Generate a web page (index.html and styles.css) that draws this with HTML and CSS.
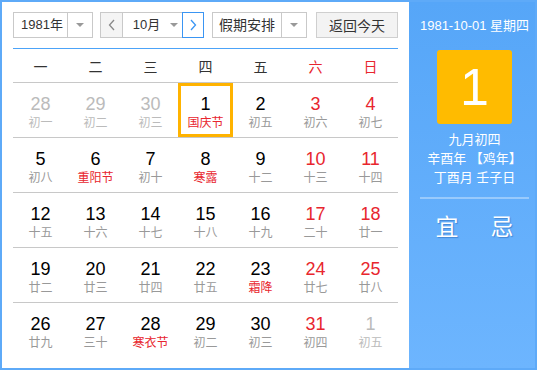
FILE: index.html
```html
<!DOCTYPE html>
<html lang="zh-CN">
<head>
  <meta charset="UTF-8" />
  <meta name="viewport" content="width=device-width, initial-scale=1" />
  <title>万年历</title>
  <link rel="stylesheet" href="styles.css">
</head>
<body>

  <div class="calendar">
    <div class="main">
      <div class="toolbar">
        <div class="select year-select">
          <span class="select-text">1981年</span>
          <span class="select-arrow"><i></i></span>
        </div>
        <div class="month-group">
          <button class="nav-btn prev">
            <svg width="8" height="12" viewBox="0 0 8 12"><polyline points="6,1 1.5,6 6,11" fill="none" stroke="#888" stroke-width="1.3"/></svg>
          </button>
          <div class="month-select">
            <span class="select-text">10月</span>
            <i></i>
          </div>
          <button class="nav-btn next">
            <svg width="8" height="12" viewBox="0 0 8 12"><polyline points="2,1 6.5,6 2,11" fill="none" stroke="#3a95f3" stroke-width="1.3"/></svg>
          </button>
        </div>
        <div class="select holiday-select">
          <span class="select-text">假期安排</span>
          <span class="select-arrow"><i></i></span>
        </div>
        <button class="today-btn">返回今天</button>
      </div>

      <div class="weekdays">
        <span>一</span><span>二</span><span>三</span><span>四</span><span>五</span>
        <span class="wk">六</span><span class="wk">日</span>
      </div>

      <div class="days">
        <div class="row">
          <div class="day other"><b>28</b><em>初一</em></div>
          <div class="day other"><b>29</b><em>初二</em></div>
          <div class="day other"><b>30</b><em>初三</em></div>
          <div class="day selected"><b>1</b><em class="fest">国庆节</em></div>
          <div class="day"><b>2</b><em>初五</em></div>
          <div class="day wk"><b>3</b><em>初六</em></div>
          <div class="day wk"><b>4</b><em>初七</em></div>
        </div>
        <div class="row">
          <div class="day"><b>5</b><em>初八</em></div>
          <div class="day"><b>6</b><em class="fest">重阳节</em></div>
          <div class="day"><b>7</b><em>初十</em></div>
          <div class="day"><b>8</b><em class="fest">寒露</em></div>
          <div class="day"><b>9</b><em>十二</em></div>
          <div class="day wk"><b>10</b><em>十三</em></div>
          <div class="day wk"><b>11</b><em>十四</em></div>
        </div>
        <div class="row">
          <div class="day"><b>12</b><em>十五</em></div>
          <div class="day"><b>13</b><em>十六</em></div>
          <div class="day"><b>14</b><em>十七</em></div>
          <div class="day"><b>15</b><em>十八</em></div>
          <div class="day"><b>16</b><em>十九</em></div>
          <div class="day wk"><b>17</b><em>二十</em></div>
          <div class="day wk"><b>18</b><em>廿一</em></div>
        </div>
        <div class="row">
          <div class="day"><b>19</b><em>廿二</em></div>
          <div class="day"><b>20</b><em>廿三</em></div>
          <div class="day"><b>21</b><em>廿四</em></div>
          <div class="day"><b>22</b><em>廿五</em></div>
          <div class="day"><b>23</b><em class="fest">霜降</em></div>
          <div class="day wk"><b>24</b><em>廿七</em></div>
          <div class="day wk"><b>25</b><em>廿八</em></div>
        </div>
        <div class="row">
          <div class="day"><b>26</b><em>廿九</em></div>
          <div class="day"><b>27</b><em>三十</em></div>
          <div class="day"><b>28</b><em class="fest">寒衣节</em></div>
          <div class="day"><b>29</b><em>初二</em></div>
          <div class="day"><b>30</b><em>初三</em></div>
          <div class="day wk"><b>31</b><em>初四</em></div>
          <div class="day other"><b>1</b><em>初五</em></div>
        </div>
      </div>
    </div>

    <div class="aside">
      <div class="aside-date">1981-10-01 星期四</div>
      <div class="big-day">1</div>
      <div class="lunar">
        <p>九月初四</p>
        <p>辛酉年 【鸡年】</p>
        <p>丁酉月 壬子日</p>
      </div>
      <div class="yiji">
        <span>宜</span>
        <span>忌</span>
      </div>
    </div>
  </div>

</body>
</html>
```

FILE: styles.css
```css
body {
  margin: 0;
  padding: 0;
  font-family: "Liberation Sans", "Noto Sans CJK SC", sans-serif;
  background: #fff;
}

.calendar {
  width: 537px;
  height: 370px;
  box-sizing: border-box;
  border: 2px solid #5eaaf8;
  display: flex;
}

.main {
  flex: 0 0 407px;
  box-sizing: border-box;
  background: #fff;
  padding: 10px 11px 0 11px;
}

/* toolbar */
.toolbar {
  display: flex;
  align-items: center;
  height: 26px;
  padding-bottom: 10px;
  border-bottom: 1px solid #4ca3f8;
}

.select {
  display: flex;
  height: 26px;
  box-sizing: border-box;
  border: 1px solid #c9c9c9;
  background: #fff;
  font-size: 13px;
  color: #333;
}

.select-text {
  flex: 1;
  text-align: center;
  line-height: 24px;
}

.select-arrow {
  width: 24px;
  border-left: 1px solid #c9c9c9;
  display: flex;
  align-items: center;
  justify-content: center;
}

.select i,
.month-select i {
  width: 0;
  height: 0;
  border-left: 4px solid transparent;
  border-right: 4px solid transparent;
  border-top: 4px solid #999;
}

.year-select {
  width: 80px;
}

.year-select .select-text {
  padding-left: 3px;
}

.month-group {
  display: flex;
  width: 104px;
  height: 26px;
  margin-left: 7px;
  box-sizing: border-box;
  border: 1px solid #c9c9c9;
  border-right: none;
}

.nav-btn {
  width: 22px;
  padding: 0;
  margin: 0;
  border: none;
  background: #f4f4f4;
  display: flex;
  align-items: center;
  justify-content: center;
}

.nav-btn.prev {
  border-right: 1px solid #c9c9c9;
}

.nav-btn.next {
  background: #fff;
  border: 1px solid #3a95f3;
  margin: -1px 0;
  height: 26px;
}

.month-select {
  flex: 1;
  display: flex;
  align-items: center;
  justify-content: center;
  gap: 10px;
  font-size: 13px;
  color: #333;
}

.month-select .select-text {
  flex: none;
  padding-left: 6px;
}

.holiday-select {
  width: 95px;
  margin-left: 8px;
}

.holiday-select .select-text {
  font-size: 14px;
}

.today-btn {
  margin-left: auto;
  width: 82px;
  height: 26px;
  padding: 0;
  border: 1px solid #cfcfcf;
  background: #f3f3f3;
  font-family: inherit;
  font-size: 14px;
  color: #333;
}

/* week header */
.weekdays {
  display: grid;
  grid-template-columns: repeat(7, 55px);
  height: 33px;
  align-items: center;
  border-bottom: 1px solid #c8c8c8;
}

.weekdays span {
  text-align: center;
  font-size: 14px;
  color: #333;
  padding-top: 1px;
}

.weekdays .wk {
  color: #e8262e;
}

/* day grid */
.row {
  display: grid;
  grid-template-columns: repeat(7, 55px);
  height: 54px;
  border-bottom: 1px solid #c8c8c8;
}

.row:last-child {
  border-bottom: none;
}

.day {
  display: flex;
  flex-direction: column;
  align-items: center;
  padding-top: 10px;
  box-sizing: border-box;
}

.day b {
  font-weight: normal;
  font-size: 18px;
  line-height: 22px;
  color: #000;
}

.day em {
  font-style: normal;
  font-size: 12px;
  line-height: 16px;
  color: #999;
}

.day.wk b {
  color: #e8262e;
}

.day em.fest {
  color: #e8262e;
}

.day.other b,
.day.other em {
  color: #bbb;
}

.day.selected {
  box-shadow: inset 0 0 0 3px #ffb300;
}

/* right panel */
.aside {
  flex: 1;
  background: linear-gradient(#56a6f8, #6db5fe);
  color: #fff;
  padding-left: 5px;
  display: flex;
  flex-direction: column;
  align-items: center;
}

.aside-date {
  margin-top: 15px;
  font-size: 13px;
  line-height: 18px;
}

.big-day {
  width: 75px;
  height: 74px;
  margin-top: 15px;
  background: #ffbb00;
  border-radius: 3px;
  text-align: center;
  font-size: 52px;
  line-height: 74px;
}

.lunar {
  margin-top: 6px;
  text-align: center;
  font-size: 13px;
  line-height: 19px;
}

.lunar p {
  margin: 0;
}

.yiji {
  width: 109px;
  margin-top: 10px;
  border-top: 2px solid rgba(255, 255, 255, 0.35);
  display: flex;
  justify-content: center;
  gap: 32px;
  padding-top: 13px;
  font-size: 23px;
  line-height: 30px;
  text-shadow: 1px 1px 1px rgba(0, 60, 140, 0.35);
}
```
